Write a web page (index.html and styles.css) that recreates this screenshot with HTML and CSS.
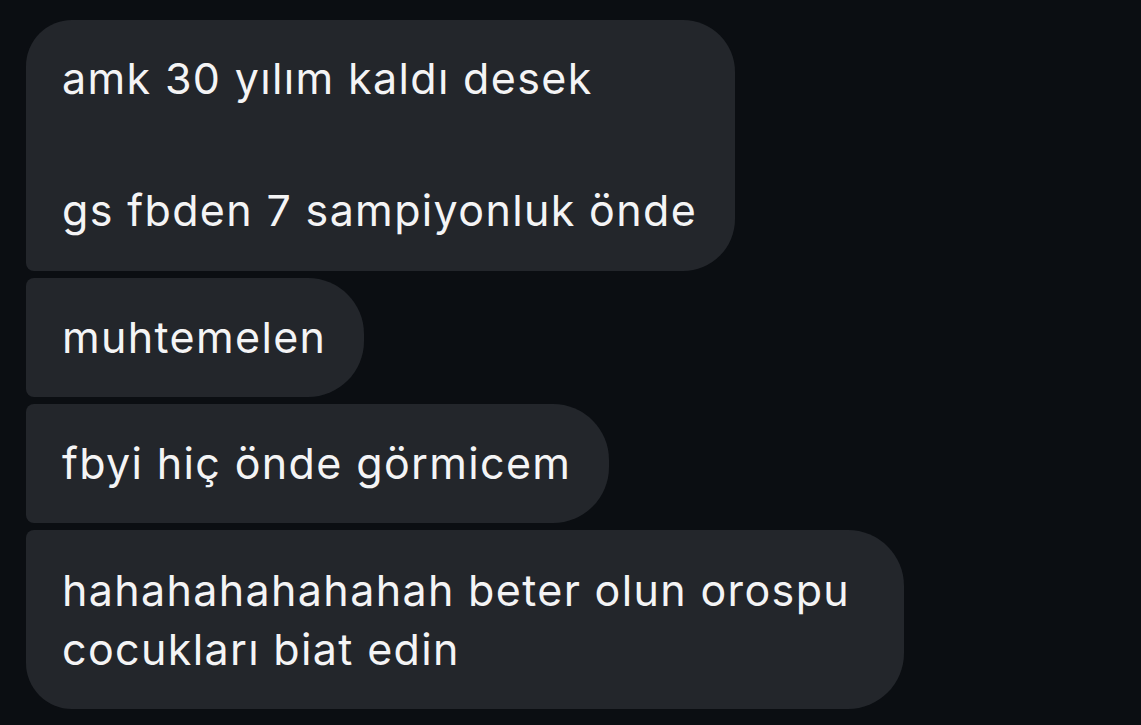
FILE: index.html
```html
<!DOCTYPE html>
<html lang="tr">
<head>
<meta charset="utf-8">
<title>Mesajlar</title>
<link rel="stylesheet" href="styles.css">
</head>
<body>
<main class="thread">
  <div class="bubble first">
    <p class="line">amk 30 yılım kaldı desek</p>
    <p class="line gap-before">gs fbden 7 sampiyonluk önde</p>
  </div>
  <div class="bubble middle">
    <p class="line">muhtemelen</p>
  </div>
  <div class="bubble middle">
    <p class="line">fbyi hiç önde görmicem</p>
  </div>
  <div class="bubble last">
    <p class="line">hahahahahahahah beter olun orospu cocukları biat edin</p>
  </div>
</main>
</body>
</html>
```

FILE: styles.css
```css
* {
  box-sizing: border-box;
}

html, body {
  margin: 0;
  padding: 0;
  background: #0b0e12;
}

body {
  width: 1141px;
  height: 725px;
  overflow: hidden;
  font-family: Inter, "Noto Sans", "Liberation Sans", sans-serif;
}

.thread {
  display: flex;
  flex-direction: column;
  align-items: flex-start;
  gap: 7px;
  padding: 20px 0 0 26px;
}

.bubble {
  background: #23262b;
  color: #f4f4f5;
  font-size: 43px;
  letter-spacing: 1.35px;
  line-height: 57px;
  padding: 31px 38px 31px 36px;
  border-radius: 8px 56px 56px 8px;
  max-width: 878px;
}

.line {
  margin: 0;
}

.gap-before {
  margin-top: 75px;
}

.first {
  padding-top: 30px;
  padding-bottom: 32px;
  border-radius: 46px 52px 52px 8px;
}

.last {
  width: 878px;
  line-height: 59px;
  padding-top: 31px;
  padding-bottom: 30px;
  border-radius: 8px 56px 56px 46px;
}
```
